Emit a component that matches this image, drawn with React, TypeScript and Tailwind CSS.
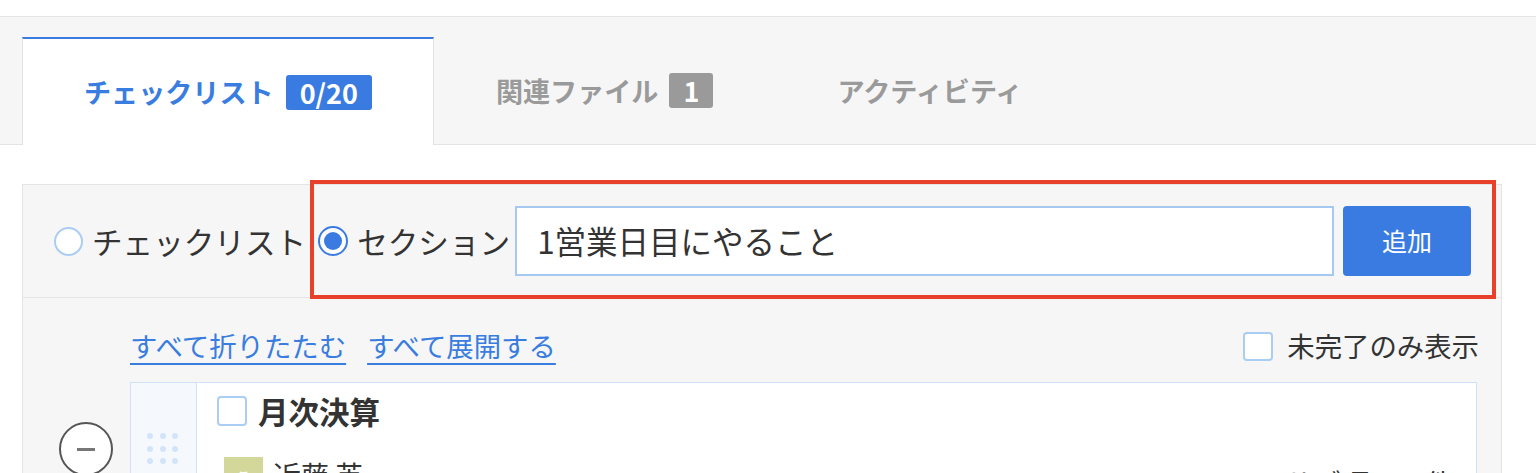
import React from "react";

const font = { fontFamily: '"Noto Sans CJK JP", "Noto Sans", sans-serif' };

function Tab({ label, badge, active }: { label: string; badge?: string; active?: boolean }) {
  if (active) {
    return (
      <div className="-mb-px flex h-[108px] items-center border-x border-t-2 border-x-[#e2e2e2] border-t-[#3a7be2] bg-white px-[61px]">
        <span className="text-[27.1px] font-bold leading-none text-[#3a7de0]">{label}</span>
        {badge && (
          <span className="ml-[12px] flex h-[35px] items-center rounded-[3px] bg-[#3a7be2] px-[14px] text-[27px] font-bold leading-none text-white">
            {badge}
          </span>
        )}
      </div>
    );
  }
  return (
    <div className="flex h-[107px] items-center px-[62px]">
      <span className="text-[27.1px] font-bold leading-none text-[#9a9a9a]">{label}</span>
      {badge && (
        <span className="ml-[11px] flex h-[35px] items-center rounded-[3px] bg-[#9a9a9a] px-[14px] text-[27px] font-bold leading-none text-white">
          {badge}
        </span>
      )}
    </div>
  );
}

function Radio({ checked }: { checked?: boolean }) {
  return checked ? (
    <span className="flex h-[30px] w-[30px] items-center justify-center rounded-full border-2 border-[#3a7be2] bg-white">
      <span className="h-[18px] w-[18px] rounded-full bg-[#3a7be2]" />
    </span>
  ) : (
    <span className="h-[29px] w-[29px] rounded-full border-2 border-[#aacdf4] bg-white" />
  );
}

export default function App() {
  return (
    <div className="relative h-[473px] overflow-hidden bg-white text-[#333]" style={font}>
      <div className="h-4" />
      {/* tabs */}
      <div className="flex h-[129px] items-end border-y border-[#e4e4e4] bg-[#f6f6f6] pl-[22px] pt-5">
        <Tab label="チェックリスト" badge="0/20" active />
        <Tab label="関連ファイル" badge="1" />
        <Tab label="アクティビティ" />
      </div>

      {/* panel */}
      <div className="ml-[22px] mt-[39px] w-[1480px] border border-[#e4e4e4] bg-[#f6f6f6]">
        <div className="flex h-[113px] items-center border-b border-[#e4e4e4] pl-[31px] pr-[30px]">
          <Radio />
          <span className="ml-[9px] text-[30.6px] leading-none">チェックリスト</span>
          <span className="ml-[12px]">
            <Radio checked />
          </span>
          <span className="ml-[9px] text-[30.6px] leading-none">セクション</span>
          <div className="ml-[5px] flex h-[70px] flex-1 items-center border-2 border-[#a6c9f1] bg-white pl-[20px]">
            <span className="text-[31.5px] leading-none">1営業日目にやること</span>
          </div>
          <button className="ml-[9px] h-[70px] w-[128px] rounded-[4px] bg-[#3a7be2] text-[25px] text-white">
            追加
          </button>
        </div>

        <div className="flex h-[84px] items-center pl-[107px] pr-[22px] pt-3">
          <a className="text-[27.4px] leading-none text-[#3a7de0] underline underline-offset-[6px]">すべて折りたたむ</a>
          <a className="ml-[21px] text-[27.4px] leading-none text-[#3a7de0] underline underline-offset-[6px]">すべて展開する</a>
          <div className="ml-auto flex items-center">
            <span className="h-[29px] w-[30px] rounded-[4px] border-2 border-[#aacdf4] bg-white" />
            <span className="ml-[14px] text-[27.4px] leading-none">未完了のみ表示</span>
          </div>
        </div>

        <div className="flex pr-[24px]">
          <div className="w-[107px] shrink-0 pl-[36px] pt-[40px]">
            <div className="flex h-[54px] w-[54px] items-center justify-center rounded-full border-2 border-[#555] bg-white">
              <span className="h-[3px] w-[18px] bg-[#777]" />
            </div>
          </div>
          <div className="flex h-[200px] flex-1 border border-[#cfe2f8] bg-white">
            <div className="w-[66px] shrink-0 border-r border-[#cfe2f8] bg-[#f5f9fe] pl-[16px] pt-[50px]">
              <div className="grid w-fit grid-cols-3 gap-[6.5px]">
                {Array.from({ length: 9 }).map((_, i) => (
                  <span key={i} className="h-[6px] w-[6px] rounded-full bg-[#d3e4fa]" />
                ))}
              </div>
            </div>
            <div className="flex-1 pl-[20px] pr-[23px] pt-[13px]">
              <div className="flex items-center">
                <span className="h-[30px] w-[30px] rounded-[4px] border-2 border-[#aacdf4] bg-white" />
                <span className="ml-[11px] text-[30.5px] font-bold leading-none">月次決算</span>
              </div>
              <div className="mt-[30px] flex items-start">
                <span className="ml-[7px] flex h-[39px] w-[39px] items-center justify-center bg-[#d3d79a] text-[14px] text-white">
                  こ
                </span>
                <span className="ml-[10px] mt-[4px] text-[28px] leading-none">近藤 英</span>
                <span className="ml-auto mt-[12px] text-[28px] leading-none">サブ項目 4 件</span>
              </div>
            </div>
          </div>
        </div>
      </div>

      {/* annotation */}
      <div className="pointer-events-none absolute left-[310px] top-[180px] h-[119px] w-[1186px] border-4 border-[#e7412b]" />
    </div>
  );
}
